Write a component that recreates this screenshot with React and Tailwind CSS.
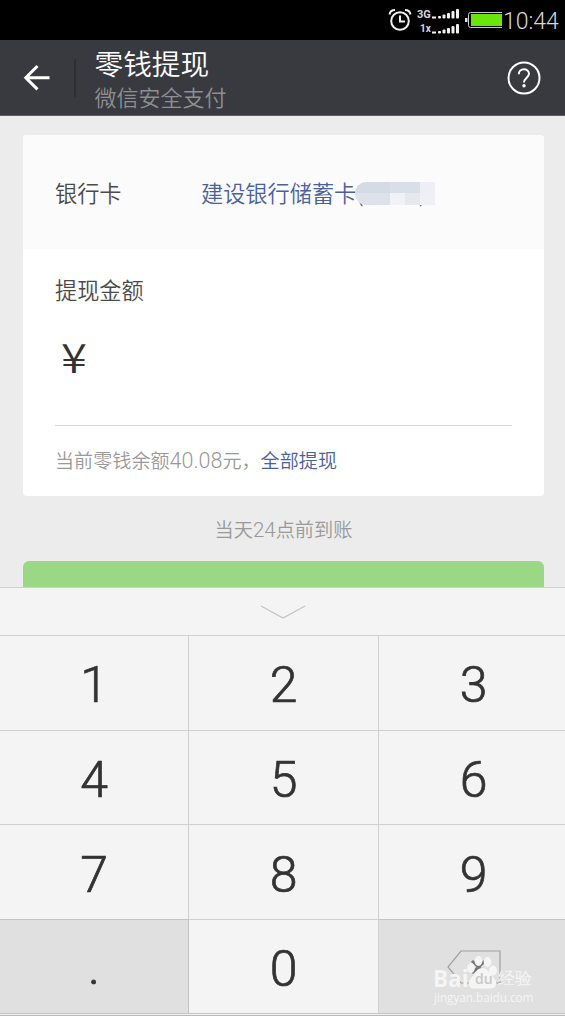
const KEYS = ['1', '2', '3', '4', '5', '6', '7', '8', '9']

// Blurred-out card digits, two rows of blocks
const MOSAIC = [
  'bg-[#d5dae5]', 'bg-[#d5dae5]', 'bg-[#d9dee8]', 'bg-[#d9dee8]', 'bg-[#eeeff4]',
  'bg-[#dee2ea]', 'bg-[#dde1ea]', 'bg-[#f1f2f4]', 'bg-[#e6e8ee]', 'bg-[#eff0f3]',
]

function SignalBars() {
  return (
    <svg width="28" height="10" viewBox="0 0 28 10" fill="#f2f2f2">
      <rect x="0" y="7.5" width="4" height="2" />
      <rect x="6" y="7" width="3" height="2.5" rx="1" />
      <rect x="10.5" y="5.5" width="3" height="4" rx="1" />
      <rect x="15" y="4" width="3" height="5.5" rx="1" />
      <rect x="19.5" y="2" width="3" height="7.5" rx="1" />
      <rect x="24" y="0" width="3" height="9.5" rx="1" />
    </svg>
  )
}

function StatusBar() {
  return (
    <div className="h-10 bg-black flex items-center justify-end pr-[8px] text-[#d8d8d8]">
      <svg width="24" height="24" viewBox="0 0 24 24" fill="none" stroke="#f0f0f0" strokeWidth="2" className="mr-[5px]">
        <circle cx="12" cy="13" r="8.8" />
        <path d="M12 7.5v6h5M1.5 6.5C2 3.5 4 2 7 2M22.5 6.5C22 3.5 20 2 17 2" />
      </svg>
      <div className="w-[43px] flex flex-col gap-[5px] pt-[3px]">
        <div className="h-[10px] flex items-center justify-between">
          <span className="font-['Roboto',sans-serif] text-[11px] leading-none font-bold">3G</span>
          <SignalBars />
        </div>
        <div className="h-[10px] flex items-center justify-between pl-[3px]">
          <span className="font-['Roboto',sans-serif] text-[10px] leading-none font-bold">1x</span>
          <SignalBars />
        </div>
      </div>
      <svg width="38" height="18" viewBox="0 0 38 18" className="ml-[5px]">
        <rect x="0" y="7" width="2.5" height="4" fill="#ddd" />
        <path d="M37 1.5H5.5Q3.5 1.5 3.5 3.5V14.5Q3.5 16.5 5.5 16.5H37" fill="none" stroke="#ccc" />
        <rect x="6" y="3" width="31" height="12" fill="#6ae60f" />
      </svg>
      <span className="font-['Roboto',sans-serif] font-light text-[23px] leading-10 w-[54px] whitespace-nowrap pt-[3px]">10:44</span>
    </div>
  )
}

function Header() {
  return (
    <header className="h-[76px] bg-[#393a3f] border-b border-[#66576a] flex items-center">
      <svg width="28" height="28" viewBox="0 0 28 28" fill="none" stroke="#fff" strokeWidth="3" className="ml-[23px]">
        <path d="M26.5 13.7H3M14.5 2L2.8 13.7L14.5 25.4" />
      </svg>
      <div className="w-[2px] h-[38px] ml-[23px] bg-[#2e2f33]" />
      <div className="ml-[18.5px] flex-1">
        <h1 className="text-[28.7px] leading-[38px] font-[350] text-white">零钱提现</h1>
        <p className="-mt-px text-[22px] leading-[30px] font-[350] text-[#8e8f8f]">微信安全支付</p>
      </div>
      <svg width="34" height="34" viewBox="0 0 34 34" fill="none" stroke="#fff" strokeWidth="2" className="mr-[24px]">
        <circle cx="17" cy="17" r="15.5" />
        <path d="M11.8 13.2C11.8 6.8 22 6.8 22 12.8C22 16.5 17 17 17 21.5" />
        <circle cx="17" cy="24.8" r="1.7" fill="#fff" stroke="none" />
      </svg>
    </header>
  )
}

function Watermark() {
  return (
    <div className="absolute left-[50px] top-[36px] w-[108px] h-[50px] text-[#f5f5f5]">
      <svg width="104" height="34" viewBox="0 0 104 34" fill="#f5f5f5" className="absolute left-0 top-0">
        <ellipse cx="42" cy="12" rx="3.8" ry="5" />
        <ellipse cx="49.5" cy="5" rx="3.8" ry="5" />
        <ellipse cx="58.5" cy="6" rx="3.8" ry="5" />
        <ellipse cx="64" cy="14.5" rx="4" ry="5" />
        <path d="M53 12C59 12 61 18 64 21C70 27 67 32.500 61 32.500H45C39 32.500 38 26 43 21C47 18 48 12 53 12Z" />
      </svg>
      <span className="absolute left-[4px] top-[13px] font-['Open_Sans',sans-serif] font-bold text-[22.5px] leading-[20px]">Bai</span>
      <span className="absolute left-[46px] top-[14px] font-['Open_Sans',sans-serif] font-semibold text-[14px] leading-[18px] text-[#c8c8c8]">du</span>
      <span className="absolute left-[69px] top-[13px] font-medium text-[16.5px] leading-[20px] whitespace-nowrap">经验</span>
      <span className="absolute left-[5px] top-[34px] font-['Open_Sans',sans-serif] font-normal text-[11.7px] leading-[14px] whitespace-nowrap">jingyan.baidu.com</span>
    </div>
  )
}

function Keypad() {
  return (
    <div className="bg-[#f4f4f4] border-t border-[#d0d0d0] font-['Roboto',sans-serif] font-light text-[50px] text-[#333] [-webkit-text-stroke:0.7px_#333]">
      <button className="w-full h-[47px] flex items-center justify-center">
        <svg width="46" height="14" viewBox="0 0 46 14" fill="none" stroke="#c4c4c4" strokeWidth="1.3" className="mt-px">
          <path d="M1 1L23 13L45 1" />
        </svg>
      </button>
      <div className="grid grid-cols-[189px_190px_190px] auto-rows-[94.6px]">
        {KEYS.map((key) => (
          <button key={key} className="border-t border-r border-[#d0d0d0] flex items-center justify-center leading-none pt-[5px]">
            {key}
          </button>
        ))}
        <button className="bg-[#e0e0e0] border-t border-r border-[#c4c4c4] flex items-center justify-center leading-none">.</button>
        <button className="border-t border-r border-[#d0d0d0] flex items-center justify-center leading-none pt-[5px]">0</button>
        <div className="relative bg-[#e0e0e0] border-t border-[#c4c4c4] pl-[68px] pt-[30px] [-webkit-text-stroke:0]">
          <svg width="54" height="34" viewBox="0 0 54 34" fill="none" stroke="#a0a0a0" strokeWidth="1.2">
            <path d="M14 1H53V33H14L1 17Z" />
            <path d="M25 11L38 23M38 11L25 23" stroke="#777" strokeWidth="3" />
          </svg>
          <Watermark />
        </div>
      </div>
      <div className="h-[2.6px] border-y border-t-[#c4c4c4] border-b-[#b8b8b8]" />
    </div>
  )
}

export default function App() {
  return (
    <div className="w-[565px] h-[1016px] overflow-hidden flex flex-col bg-[#ececec] font-['Noto_Sans_CJK_SC',sans-serif]">
      <StatusBar />
      <Header />
      <main className="flex-1 min-h-0 overflow-hidden pl-[23px] pt-[19px] pr-[21px] font-[350]">
        <section className="h-[361px] rounded bg-white overflow-hidden">
          <div className="h-[114px] bg-[#fbfbfb] px-8 pt-px flex items-center text-[22.2px]">
            <span className="w-[146px] text-[#4a4a4a]">银行卡</span>
            <span className="text-[#4a629a]">建设银行储蓄卡</span>
            <span className="relative w-[80px] text-[#4a629a]">
              (<span className="inline-block w-[55px]" />)
              <span className="absolute -left-[1px] top-[6px] w-[80px] h-[23px] grid grid-cols-[20px_15px_15px_15px_15px] rounded-l-xl overflow-hidden">
                {MOSAIC.map((color, i) => (
                  <span key={i} className={color} />
                ))}
              </span>
            </span>
          </div>
          <div className="px-8">
            <div className="pt-[24px] text-[22.2px] leading-[33px] text-[#4a4a4a]">提现金额</div>
            <div className="h-[120px] pt-[25px] pl-[6px] border-b border-[#d9d9d9] text-[41px] leading-[48px] text-[#333]">
              <span className="inline-block origin-left scale-x-115">¥</span>
            </div>
            <div className="pt-[19px] text-[19.1px] leading-[30px] text-[#999]">
              当前零钱余额<span className="font-['Roboto',sans-serif] font-light text-[21.5px]">40.08</span>元，
              <span className="text-[#4a629a]">全部提现</span>
            </div>
          </div>
        </section>
        <p className="mt-[18px] mb-4 text-center text-[19.2px] leading-[30px] text-[#999]">
          当天<span className="font-['Roboto',sans-serif] font-light text-[20.5px]">24</span>点前到账
        </p>
        <button className="block w-full h-[60px] rounded-md bg-[#9bd885]" />
      </main>
      <Keypad />
    </div>
  )
}
